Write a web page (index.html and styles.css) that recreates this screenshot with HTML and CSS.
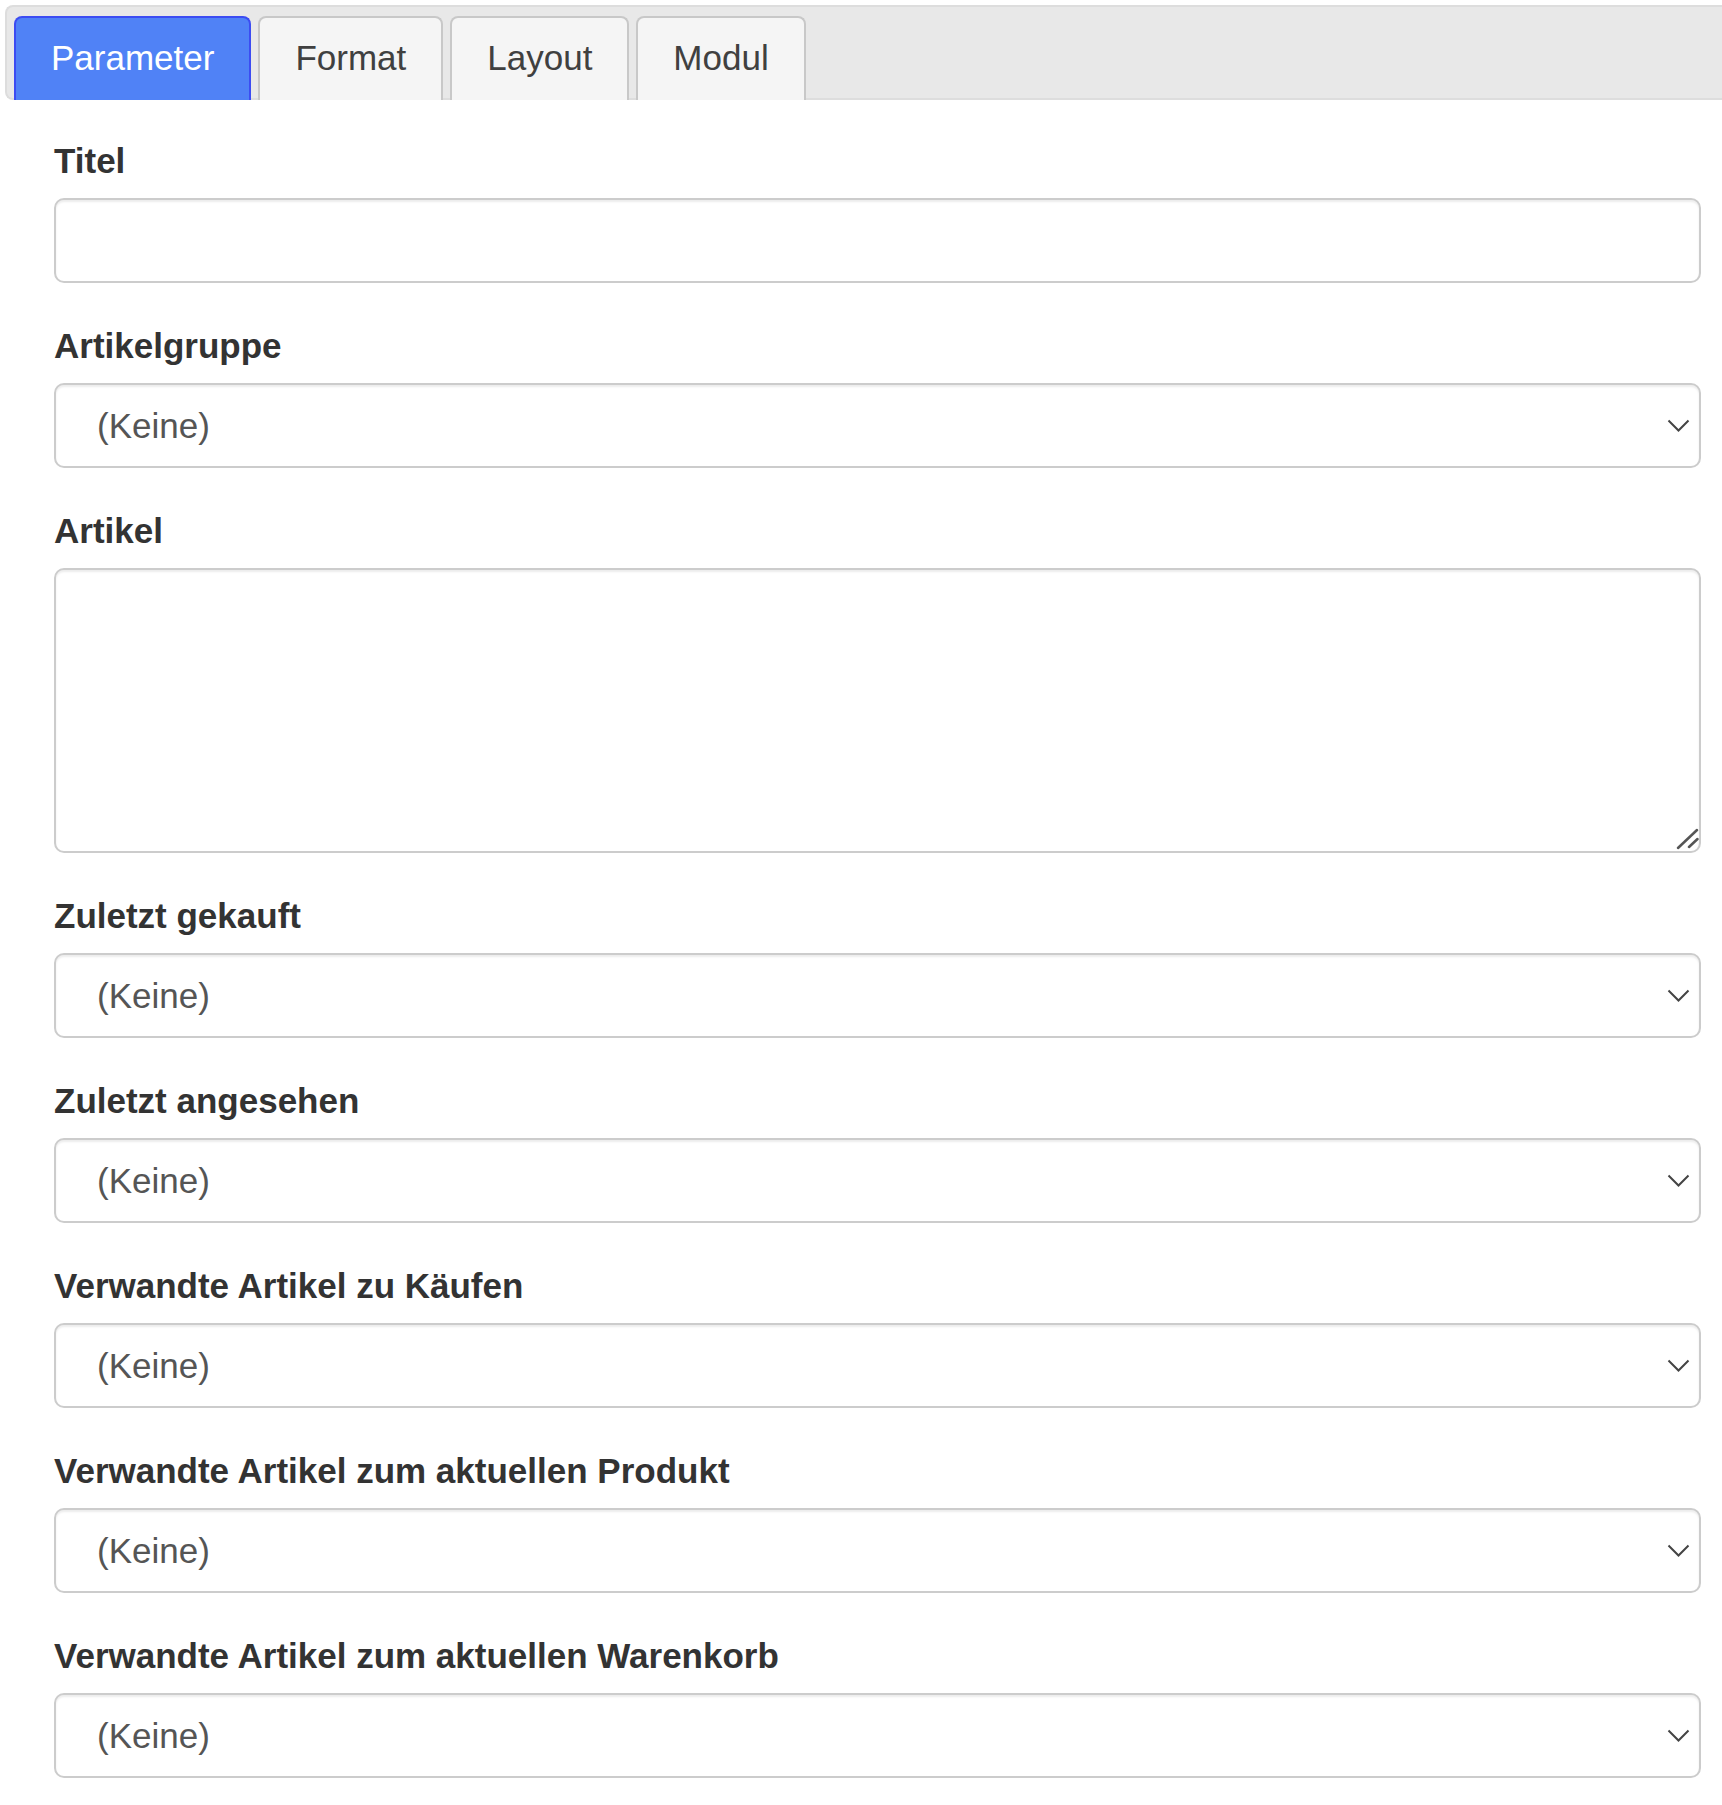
FILE: index.html
```html
<!DOCTYPE html>
<html lang="de">
<head>
  <meta charset="UTF-8">
  <meta name="viewport" content="width=device-width, initial-scale=1.0">
  <title>Modul bearbeiten</title>
  <link rel="stylesheet" href="styles.css">
</head>
<body>
  <div class="page">
    <!-- Reiter -->
    <ul class="tabs">
      <li class="tab active">Parameter</li>
      <li class="tab">Format</li>
      <li class="tab">Layout</li>
      <li class="tab">Modul</li>
    </ul>

    <form class="params">
      <div class="form-group">
        <label for="titel">Titel</label>
        <input type="text" id="titel" class="form-control">
      </div>

      <div class="form-group">
        <label for="gruppe">Artikelgruppe</label>
        <div class="select-wrap">
          <select id="gruppe" class="form-control"><option>(Keine)</option></select>
          <svg class="chevron" width="23" height="14" viewBox="0 0 23 14"><polyline points="1.5,1.5 11.5,11.5 21.5,1.5" fill="none" stroke="#444" stroke-width="2"/></svg>
        </div>
      </div>

      <div class="form-group">
        <label for="artikel">Artikel</label>
        <div class="area-wrap">
          <textarea id="artikel" class="form-control" rows="5"></textarea>
          <svg class="grip" width="24" height="24" viewBox="0 0 24 24">
            <line x1="3" y1="21" x2="22" y2="3" stroke="#555" stroke-width="2.5" stroke-linecap="round"/>
            <line x1="14" y1="20" x2="22.5" y2="12" stroke="#555" stroke-width="2.5" stroke-linecap="round"/>
          </svg>
        </div>
      </div>

      <div class="form-group">
        <label for="gekauft">Zuletzt gekauft</label>
        <div class="select-wrap">
          <select id="gekauft" class="form-control"><option>(Keine)</option></select>
          <svg class="chevron" width="23" height="14" viewBox="0 0 23 14"><polyline points="1.5,1.5 11.5,11.5 21.5,1.5" fill="none" stroke="#444" stroke-width="2"/></svg>
        </div>
      </div>

      <div class="form-group">
        <label for="angesehen">Zuletzt angesehen</label>
        <div class="select-wrap">
          <select id="angesehen" class="form-control"><option>(Keine)</option></select>
          <svg class="chevron" width="23" height="14" viewBox="0 0 23 14"><polyline points="1.5,1.5 11.5,11.5 21.5,1.5" fill="none" stroke="#444" stroke-width="2"/></svg>
        </div>
      </div>

      <div class="form-group">
        <label for="kaufen">Verwandte Artikel zu Käufen</label>
        <div class="select-wrap">
          <select id="kaufen" class="form-control"><option>(Keine)</option></select>
          <svg class="chevron" width="23" height="14" viewBox="0 0 23 14"><polyline points="1.5,1.5 11.5,11.5 21.5,1.5" fill="none" stroke="#444" stroke-width="2"/></svg>
        </div>
      </div>

      <div class="form-group">
        <label for="produkt">Verwandte Artikel zum aktuellen Produkt</label>
        <div class="select-wrap">
          <select id="produkt" class="form-control"><option>(Keine)</option></select>
          <svg class="chevron" width="23" height="14" viewBox="0 0 23 14"><polyline points="1.5,1.5 11.5,11.5 21.5,1.5" fill="none" stroke="#444" stroke-width="2"/></svg>
        </div>
      </div>

      <div class="form-group">
        <label for="warenkorb">Verwandte Artikel zum aktuellen Warenkorb</label>
        <div class="select-wrap">
          <select id="warenkorb" class="form-control"><option>(Keine)</option></select>
          <svg class="chevron" width="23" height="14" viewBox="0 0 23 14"><polyline points="1.5,1.5 11.5,11.5 21.5,1.5" fill="none" stroke="#444" stroke-width="2"/></svg>
        </div>
      </div>
    </form>
  </div>
</body>
</html>
```

FILE: styles.css
```css
html, body {
  margin: 0;
  padding: 0;
  background: #fff;
  overflow-x: hidden;
}
body {
  font-family: "Liberation Sans", Arial, sans-serif;
  font-size: 35px;
  line-height: 50px;
  color: #333;
}
.page {
  padding: 5px 0 0 5px;
}

/* Reiterleiste */
.tabs {
  display: flex;
  list-style: none;
  margin: 0;
  padding: 9px 7px 0;
  height: 95px;
  box-sizing: border-box;
  background: #e8e8e8;
  border: 2px solid #dddddd;
  border-right: none;
  border-radius: 8px 0 0 8px;
}
.tab {
  height: 84px;
  box-sizing: border-box;
  display: flex;
  align-items: center;
  padding: 0 35px 2px;
  margin-right: 7px;
  background: #f5f5f5;
  border: 2px solid #c8c8c8;
  border-bottom: none;
  border-radius: 8px 8px 0 0;
  color: #404040;
  cursor: pointer;
}
.tab.active {
  background: #5082f6;
  border-color: #3c4cf2;
  color: #fff;
}

/* Formular */
.params {
  padding: 0 21px 0 49px;
  margin-top: 35.5px;
}
.form-group {
  margin-bottom: 37.5px;
}
label {
  display: block;
  font-weight: bold;
  margin-bottom: 12.5px;
  color: #333;
}
.form-control {
  display: block;
  width: 100%;
  height: 85px;
  box-sizing: border-box;
  margin: 0;
  padding: 0 30px;
  font-family: inherit;
  font-size: 35px;
  color: #555;
  background: #fff;
  border: 2px solid #cccccc;
  border-radius: 10px;
  box-shadow: inset 0 2px 2px rgba(0, 0, 0, 0.075);
  outline: none;
}
.select-wrap, .area-wrap {
  position: relative;
}
select.form-control {
  appearance: none;
  -webkit-appearance: none;
  padding-left: 41px;
}
.chevron {
  position: absolute;
  right: 11px;
  top: 50%;
  margin-top: -7px;
  pointer-events: none;
}
textarea.form-control {
  height: 285px;
  padding: 15px 30px;
  resize: none;
}
.grip {
  position: absolute;
  right: 2px;
  bottom: 2px;
  pointer-events: none;
}
```
